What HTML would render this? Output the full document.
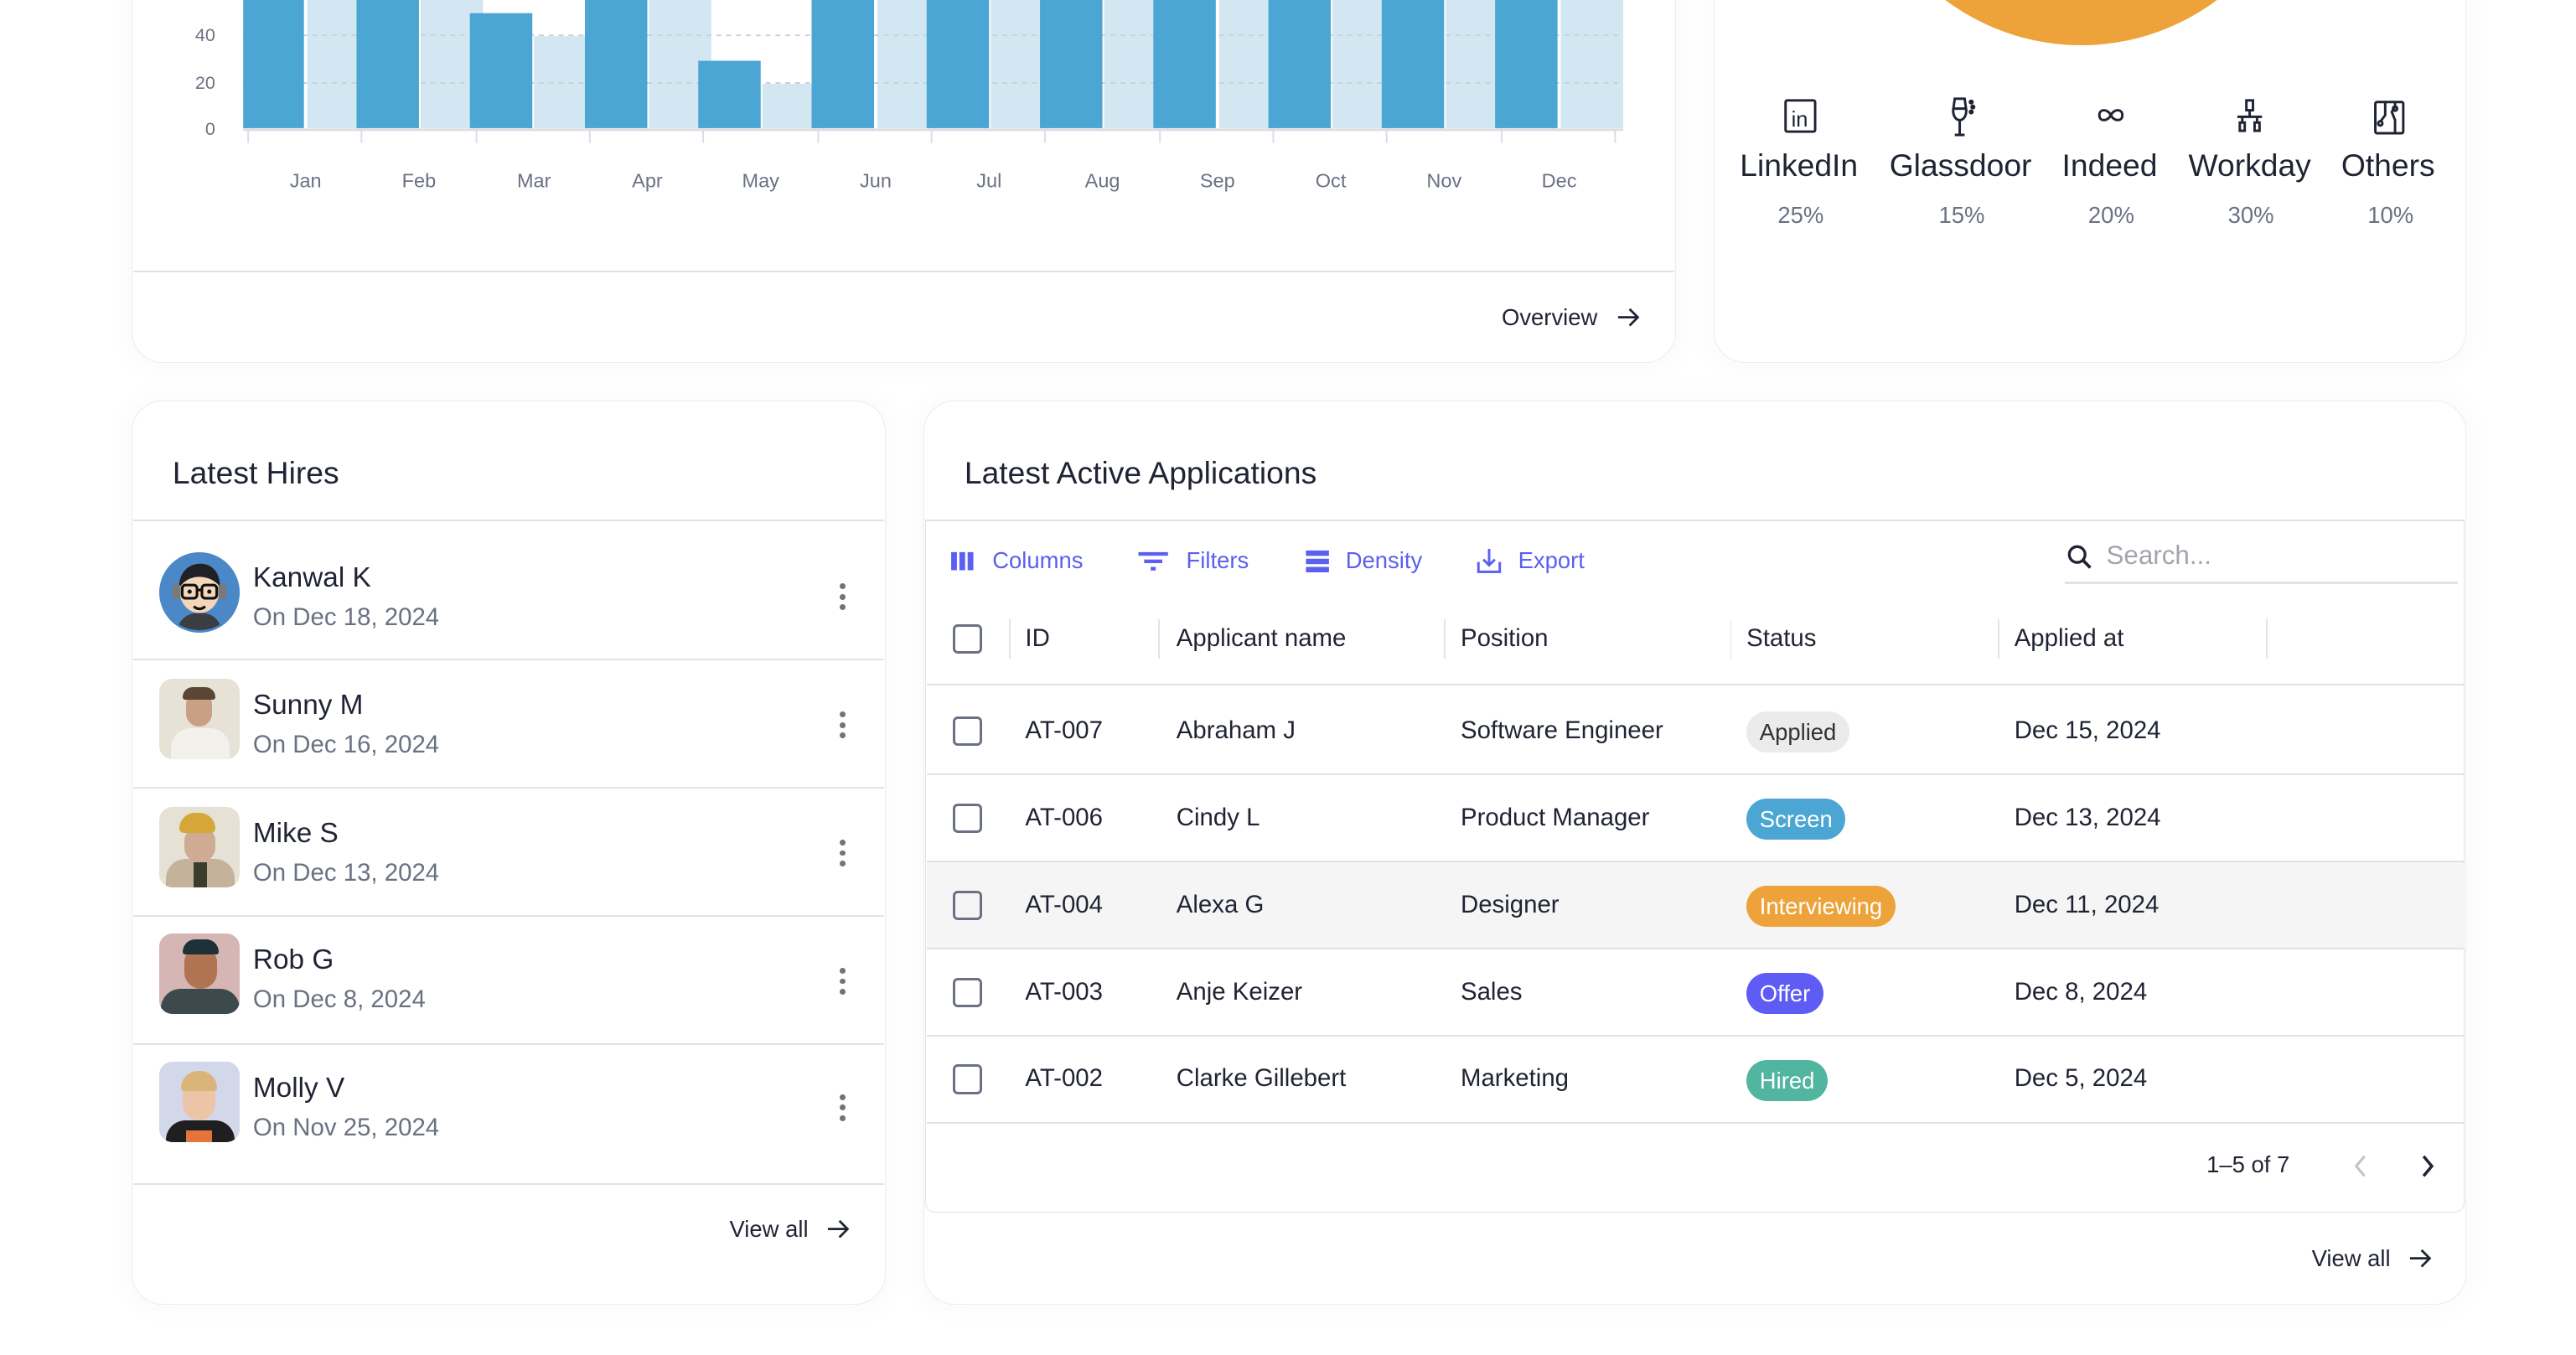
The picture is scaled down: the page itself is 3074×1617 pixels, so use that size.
<!DOCTYPE html>
<html><head><meta charset="utf-8"><style>
*{box-sizing:border-box;margin:0;padding:0}
html,body{width:3074px;height:1612px;overflow:hidden;background:#fff;font-family:"Liberation Sans",sans-serif;color:#1f2333}
#w{position:absolute;left:0;top:0;width:1570px;height:825px;zoom:1.9606}
.card{position:absolute;background:#fff;border:1px solid #ececec;border-radius:19px;box-shadow:0 0 14px 6px rgba(0,0,0,0.018)}
.a{position:absolute;white-space:nowrap}
.hl{position:absolute;height:1px;background:#e0e2e6}
.vl{position:absolute;width:1px;background:#e4e4e4}
.t17{font-size:17px;color:#1f2333}
.g15{font-size:15px;color:#6b7184}
.cb{position:absolute;width:18px;height:18px;border:2px solid #6b7184;border-radius:3px}
.chip{position:absolute;height:25px;border-radius:13px;font-size:14px;line-height:25px;padding:0 8px;color:#fff}
.c15{font-size:15px;color:#1f2333}
.kebab{position:absolute;width:4px}
.kebab i{display:block;width:3.5px;height:3.5px;border-radius:50%;background:#737373;margin-bottom:3px}
.av{position:absolute;width:49px;height:49px;border-radius:8px;overflow:hidden}
</style></head><body><div id="w">

<!-- top-left chart card -->
<div class="card" style="left:80px;top:-40px;width:940px;height:261px"></div>
<svg class="a" style="left:0;top:0" width="1020" height="130" viewBox="0 0 1020 130">
<g font-family="Liberation Sans" font-size="11" fill="#6b7184" text-anchor="end">
<text x="131" y="25">40</text><text x="131" y="54">20</text><text x="131" y="82">0</text></g>
<g fill="#d2e7f2">
<rect x="187" y="0" width="38" height="78"/><rect x="256" y="0" width="38" height="78"/><rect x="325" y="22" width="38" height="56"/>
<rect x="395" y="0" width="38" height="78"/><rect x="464" y="51" width="38" height="27"/><rect x="534" y="0" width="38" height="78"/>
<rect x="603" y="0" width="38" height="78"/><rect x="672" y="0" width="38" height="78"/><rect x="742" y="0" width="38" height="78"/>
<rect x="811" y="0" width="38" height="78"/><rect x="880" y="0" width="38" height="78"/><rect x="950" y="0" width="38" height="78"/></g>
<g stroke="#c9d3da" stroke-width="1" stroke-dasharray="3,3"><line x1="148" y1="21.5" x2="988" y2="21.5"/><line x1="148" y1="50.5" x2="988" y2="50.5"/></g>
<g fill="#4ba6d3">
<rect x="148" y="0" width="37" height="78"/><rect x="217" y="0" width="38" height="78"/><rect x="286" y="8" width="38" height="70"/>
<rect x="356" y="0" width="38" height="78"/><rect x="425" y="37" width="38" height="41"/><rect x="494" y="0" width="38" height="78"/>
<rect x="564" y="0" width="38" height="78"/><rect x="633" y="0" width="38" height="78"/><rect x="702" y="0" width="38" height="78"/>
<rect x="772" y="0" width="38" height="78"/><rect x="841" y="0" width="38" height="78"/><rect x="910" y="0" width="38" height="78"/></g>
<line x1="148" y1="79" x2="988" y2="79" stroke="#dcdde2" stroke-width="1.5"/>
<g stroke="#dcdde2" stroke-width="1">
<line x1="151" y1="79" x2="151" y2="87"/><line x1="220" y1="79" x2="220" y2="87"/><line x1="290" y1="79" x2="290" y2="87"/><line x1="359" y1="79" x2="359" y2="87"/><line x1="428" y1="79" x2="428" y2="87"/><line x1="498" y1="79" x2="498" y2="87"/><line x1="567" y1="79" x2="567" y2="87"/><line x1="636" y1="79" x2="636" y2="87"/><line x1="706" y1="79" x2="706" y2="87"/><line x1="775" y1="79" x2="775" y2="87"/><line x1="844" y1="79" x2="844" y2="87"/><line x1="914" y1="79" x2="914" y2="87"/><line x1="983" y1="79" x2="983" y2="87"/></g>
<g font-family="Liberation Sans" font-size="12" fill="#6b7184" text-anchor="middle">
<text x="186" y="114">Jan</text><text x="255" y="114">Feb</text><text x="325" y="114">Mar</text><text x="394" y="114">Apr</text><text x="463" y="114">May</text><text x="533" y="114">Jun</text><text x="602" y="114">Jul</text><text x="671" y="114">Aug</text><text x="741" y="114">Sep</text><text x="810" y="114">Oct</text><text x="879" y="114">Nov</text><text x="949" y="114">Dec</text></g>
</svg>
<div class="hl" style="left:81px;top:165px;width:938px"></div>
<div class="a" style="left:914px;top:185px;font-size:14px;color:#1f2333">Overview</div>
<svg class="a" style="left:983px;top:185px" width="16" height="16" viewBox="0 0 16 16"><path d="M2 8h12M9 3l5 5-5 5" fill="none" stroke="#1f2333" stroke-width="1.4"/></svg>

<!-- top-right card -->
<div class="card" style="left:1043px;top:-40px;width:458px;height:261px;overflow:hidden">
<div style="position:absolute;left:85px;top:-209px;width:276px;height:276px;border-radius:50%;background:#eda23a"></div>
</div>
<svg class="a" style="left:1080px;top:56px" width="400" height="30" viewBox="0 0 400 30" fill="none" stroke="#1f2333" stroke-width="1.5">
<rect x="7" y="5" width="18" height="19" rx="1"/><text x="10.5" y="21" font-family="Liberation Sans" font-size="13" fill="#1f2333" stroke="none">in</text>
<path d="M110 4h6l1 7c0 4-2 6-4 6s-4-2-4-6zM113 17v9M110 26h6M109.5 10h7"/><circle cx="120" cy="6" r=".8" fill="#1f2333"/><circle cx="121" cy="9" r=".8" fill="#1f2333"/><circle cx="120" cy="12" r=".8" fill="#1f2333"/>
<path d="M205 14c-2-4-7-4-7 0s5 4 7 0c2-4 7-4 7 0s-5 4-7 0z"/>
<rect x="287.5" y="5" width="4" height="6"/><path d="M289.5 11v4M282 15h15M285 15v4M294 15v4"/><rect x="283.5" y="18.5" width="3" height="5"/><rect x="292.5" y="18.5" width="3" height="5"/>
<rect x="366" y="6" width="17" height="19" rx="1"/><path d="M372 6v8l-3 4M378 6v3l-2 3 2 5v8"/><circle cx="369" cy="19" r="1.3"/><circle cx="378" cy="10" r="1.3"/>
</svg>
<div class="a" style="left:1059px;top:90px;font-size:19px">LinkedIn</div>
<div class="a" style="left:1150px;top:90px;font-size:19px">Glassdoor</div>
<div class="a" style="left:1255px;top:90px;font-size:19px">Indeed</div>
<div class="a" style="left:1332px;top:90px;font-size:19px">Workday</div>
<div class="a" style="left:1425px;top:90px;font-size:19px">Others</div>
<div class="a" style="left:1082px;top:123px;font-size:14px;color:#6b7184">25%</div>
<div class="a" style="left:1180px;top:123px;font-size:14px;color:#6b7184">15%</div>
<div class="a" style="left:1271px;top:123px;font-size:14px;color:#6b7184">20%</div>
<div class="a" style="left:1356px;top:123px;font-size:14px;color:#6b7184">30%</div>
<div class="a" style="left:1441px;top:123px;font-size:14px;color:#6b7184">10%</div>

<!-- Latest hires -->
<div class="card" style="left:80px;top:244px;width:459px;height:550px"></div>
<div class="a" style="left:105px;top:277px;font-size:19px">Latest Hires</div>
<div class="hl" style="left:81px;top:316px;width:457px"></div>
<div class="hl" style="left:81px;top:401px;width:457px"></div>
<div class="hl" style="left:81px;top:479px;width:457px"></div>
<div class="hl" style="left:81px;top:557px;width:457px"></div>
<div class="hl" style="left:81px;top:635px;width:457px"></div>
<div class="hl" style="left:81px;top:720px;width:457px"></div>

<svg class="a" style="left:97px;top:336px" width="49" height="49" viewBox="0 0 49 49"><circle cx="24.5" cy="24.5" r="24.5" fill="#4a88c7"/><path d="M12 44c3-6 8-7 12.5-7s9.5 1 12.5 7a24 24 0 0 1-25 0z" fill="#3a3d42"/><ellipse cx="24.5" cy="24" rx="12" ry="13" fill="#f3d7b8"/><path d="M12 22c0-10 6-15 13-15s12 5 12 14c-4-5-9-6-13-6s-9 2-12 7z" fill="#1f2126"/><rect x="8" y="19" width="5" height="10" rx="2.5" fill="#7a7a7a"/><rect x="36" y="19" width="5" height="10" rx="2.5" fill="#7a7a7a"/><g fill="none" stroke="#111" stroke-width="1.6"><rect x="14" y="20" width="9" height="8" rx="2"/><rect x="26" y="20" width="9" height="8" rx="2"/><path d="M23 23h3M21 33q3.5 3 7 0"/></g><circle cx="18.5" cy="24" r="1.3" fill="#111"/><circle cx="30.5" cy="24" r="1.3" fill="#111"/></svg>
<div class="a t17" style="left:154px;top:342px">Kanwal K</div>
<div class="a g15" style="left:154px;top:367px">On Dec 18, 2024</div>
<div class="kebab" style="left:511px;top:355px"><i></i><i></i><i></i></div>

<div class="av" style="left:97px;top:413px;background:#e7e2d6"><div style="position:absolute;left:7px;top:30px;width:36px;height:24px;border-radius:12px 12px 0 0;background:#f3f1ec"></div><div style="position:absolute;left:16px;top:8px;width:16px;height:21px;border-radius:8px;background:#c9a083"></div><div style="position:absolute;left:14px;top:5px;width:20px;height:8px;border-radius:8px 8px 2px 2px;background:#5b4535"></div></div>
<div class="a t17" style="left:154px;top:420px">Sunny M</div>
<div class="a g15" style="left:154px;top:445px">On Dec 16, 2024</div>
<div class="kebab" style="left:511px;top:433px"><i></i><i></i><i></i></div>

<div class="av" style="left:97px;top:491px;background:#e6e1d5"><div style="position:absolute;left:4px;top:32px;width:42px;height:20px;border-radius:12px 12px 0 0;background:#c4b39a"></div><div style="position:absolute;left:21px;top:34px;width:8px;height:16px;background:#3b3d2c"></div><div style="position:absolute;left:15px;top:12px;width:19px;height:22px;border-radius:9px;background:#cfab94"></div><div style="position:absolute;left:12px;top:4px;width:22px;height:12px;border-radius:11px 11px 3px 3px;background:#d4a737"></div></div>
<div class="a t17" style="left:154px;top:498px">Mike S</div>
<div class="a g15" style="left:154px;top:523px">On Dec 13, 2024</div>
<div class="kebab" style="left:511px;top:511px"><i></i><i></i><i></i></div>

<div class="av" style="left:97px;top:568px;background:#d6b6b4"><div style="position:absolute;left:1px;top:34px;width:48px;height:18px;border-radius:12px 12px 0 0;background:#3d4a4d"></div><div style="position:absolute;left:15px;top:8px;width:20px;height:26px;border-radius:10px;background:#b17452"></div><div style="position:absolute;left:14px;top:4px;width:22px;height:9px;border-radius:10px 10px 2px 2px;background:#1e3137"></div></div>
<div class="a t17" style="left:154px;top:575px">Rob G</div>
<div class="a g15" style="left:154px;top:600px">On Dec 8, 2024</div>
<div class="kebab" style="left:511px;top:589px"><i></i><i></i><i></i></div>

<div class="av" style="left:97px;top:646px;background:#d3d7ea"><div style="position:absolute;left:4px;top:36px;width:42px;height:16px;border-radius:12px 12px 0 0;background:#1f1f22"></div><div style="position:absolute;left:16px;top:42px;width:16px;height:8px;background:#e5743a"></div><div style="position:absolute;left:14px;top:10px;width:20px;height:26px;border-radius:10px;background:#ecc5a6"></div><div style="position:absolute;left:13px;top:6px;width:22px;height:12px;border-radius:11px 11px 2px 2px;background:#d9b57a"></div></div>
<div class="a t17" style="left:154px;top:653px">Molly V</div>
<div class="a g15" style="left:154px;top:678px">On Nov 25, 2024</div>
<div class="kebab" style="left:511px;top:666px"><i></i><i></i><i></i></div>

<div class="a" style="left:444px;top:740px;font-size:14px">View all</div>
<svg class="a" style="left:502px;top:740px" width="16" height="16" viewBox="0 0 16 16"><path d="M2 8h12M9 3l5 5-5 5" fill="none" stroke="#1f2333" stroke-width="1.4"/></svg>

<!-- Applications -->
<div class="card" style="left:562px;top:244px;width:939px;height:550px"></div>
<div class="a" style="left:587px;top:277px;font-size:19px">Latest Active Applications</div>
<div class="hl" style="left:563px;top:316px;width:937px"></div>
<div style="position:absolute;left:563px;top:317px;width:937px;height:421px;border:1px solid #e0e2e6;border-top:none;border-radius:0 0 6px 6px"></div>

<svg class="a" style="left:578px;top:333px" width="400" height="18" viewBox="0 0 400 18" fill="#5b5ff2">
<rect x="1" y="3" width="3.5" height="11"/><rect x="6" y="3" width="3.5" height="11"/><rect x="11" y="3" width="3.5" height="11"/>
<rect x="115" y="3" width="18" height="2.2"/><rect x="118.5" y="7.5" width="11" height="2.2"/><rect x="122.5" y="12" width="3" height="2.2"/>
<rect x="217" y="2" width="14" height="3.3"/><rect x="217" y="7" width="14" height="3.3"/><rect x="217" y="12" width="14" height="3.3"/>
<path d="M322 9v6h13V9M328.5 1v10M325 7.5l3.5 3.5 3.5-3.5" fill="none" stroke="#5b5ff2" stroke-width="1.5"/>
</svg>
<div class="a" style="left:604px;top:333px;font-size:14px;color:#5b5ff2">Columns</div>
<div class="a" style="left:722px;top:333px;font-size:14px;color:#5b5ff2">Filters</div>
<div class="a" style="left:819px;top:333px;font-size:14px;color:#5b5ff2">Density</div>
<div class="a" style="left:924px;top:333px;font-size:14px;color:#5b5ff2">Export</div>

<svg class="a" style="left:1258px;top:331px" width="16" height="16" viewBox="0 0 16 16"><circle cx="6.5" cy="6.5" r="4.8" fill="none" stroke="#1f2333" stroke-width="1.7"/><path d="M10 10l4.5 4.5" stroke="#1f2333" stroke-width="1.9"/></svg>
<div class="a" style="left:1282px;top:329px;font-size:16px;color:#a3a5ad">Search...</div>
<div class="hl" style="left:1257px;top:354px;width:239px;height:1.5px"></div>

<div class="cb" style="left:580px;top:380px"></div>
<div class="vl" style="left:614px;top:377px;height:24px"></div>
<div class="vl" style="left:705px;top:377px;height:24px"></div>
<div class="vl" style="left:879px;top:377px;height:24px"></div>
<div class="vl" style="left:1053px;top:377px;height:24px"></div>
<div class="vl" style="left:1216px;top:377px;height:24px"></div>
<div class="vl" style="left:1379px;top:377px;height:24px"></div>
<div class="a c15" style="left:624px;top:380px">ID</div>
<div class="a c15" style="left:716px;top:380px">Applicant name</div>
<div class="a c15" style="left:889px;top:380px">Position</div>
<div class="a c15" style="left:1063px;top:380px">Status</div>
<div class="a c15" style="left:1226px;top:380px">Applied at</div>
<div class="hl" style="left:564px;top:416px;width:936px"></div>

<div class="hl" style="left:564px;top:471px;width:936px"></div>
<div style="position:absolute;left:564px;top:525px;width:936px;height:52px;background:#f5f5f5"></div>
<div class="hl" style="left:564px;top:524px;width:936px"></div>
<div class="hl" style="left:564px;top:577px;width:936px"></div>
<div class="hl" style="left:564px;top:630px;width:936px"></div>
<div class="hl" style="left:564px;top:683px;width:936px"></div>

<div class="cb" style="left:580px;top:436px"></div>
<div class="a c15" style="left:624px;top:436px">AT-007</div><div class="a c15" style="left:716px;top:436px">Abraham J</div><div class="a c15" style="left:889px;top:436px">Software Engineer</div>
<div class="chip" style="left:1063px;top:433px;background:#ebebeb;color:#333">Applied</div><div class="a c15" style="left:1226px;top:436px">Dec 15, 2024</div>

<div class="cb" style="left:580px;top:489px"></div>
<div class="a c15" style="left:624px;top:489px">AT-006</div><div class="a c15" style="left:716px;top:489px">Cindy L</div><div class="a c15" style="left:889px;top:489px">Product Manager</div>
<div class="chip" style="left:1063px;top:486px;background:#4ba6d3">Screen</div><div class="a c15" style="left:1226px;top:489px">Dec 13, 2024</div>

<div class="cb" style="left:580px;top:542px"></div>
<div class="a c15" style="left:624px;top:542px">AT-004</div><div class="a c15" style="left:716px;top:542px">Alexa G</div><div class="a c15" style="left:889px;top:542px">Designer</div>
<div class="chip" style="left:1063px;top:539px;background:#eda23a">Interviewing</div><div class="a c15" style="left:1226px;top:542px">Dec 11, 2024</div>

<div class="cb" style="left:580px;top:595px"></div>
<div class="a c15" style="left:624px;top:595px">AT-003</div><div class="a c15" style="left:716px;top:595px">Anje Keizer</div><div class="a c15" style="left:889px;top:595px">Sales</div>
<div class="chip" style="left:1063px;top:592px;background:#5f5cf5">Offer</div><div class="a c15" style="left:1226px;top:595px">Dec 8, 2024</div>

<div class="cb" style="left:580px;top:648px"></div>
<div class="a c15" style="left:624px;top:648px">AT-002</div><div class="a c15" style="left:716px;top:648px">Clarke Gillebert</div><div class="a c15" style="left:889px;top:648px">Marketing</div>
<div class="chip" style="left:1063px;top:645px;background:#52b5a0">Hired</div><div class="a c15" style="left:1226px;top:648px">Dec 5, 2024</div>

<div class="a" style="left:1343px;top:701px;font-size:14px;color:#1f2333">1–5 of 7</div>
<svg class="a" style="left:1428px;top:701px" width="60" height="18" viewBox="0 0 60 18"><path d="M11 3l-5 6 5 6" fill="none" stroke="#c4c4c4" stroke-width="1.6"/><path d="M47 3l5 6-5 6" fill="none" stroke="#1f2333" stroke-width="1.8"/></svg>

<div class="a" style="left:1407px;top:758px;font-size:14px">View all</div>
<svg class="a" style="left:1465px;top:758px" width="16" height="16" viewBox="0 0 16 16"><path d="M2 8h12M9 3l5 5-5 5" fill="none" stroke="#1f2333" stroke-width="1.4"/></svg>

</div></body></html>
